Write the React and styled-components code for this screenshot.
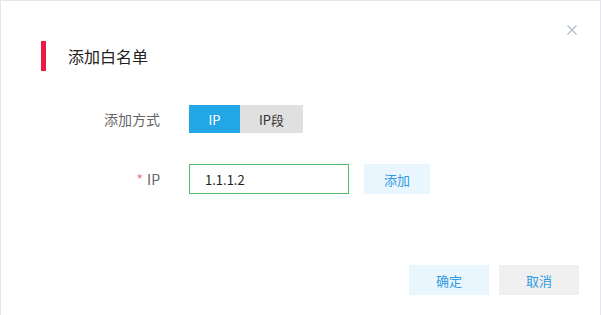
// Packages
import React, { useState } from "react"
import styled, { createGlobalStyle } from "styled-components"

// Styles
const GlobalStyle = createGlobalStyle`
    html, body {
        margin: 0;
        padding: 0;
        background: #ffffff;
    }

    body {
        font-family: "Noto Sans CJK SC", "Noto Sans", "Liberation Sans", sans-serif;
        color: #333333;
    }
`

const Modal = styled.div`
    width: 601px;
    height: 315px;
    box-sizing: border-box;
    border: 1px solid #e4e6eb;
    border-bottom: none;
    display: flex;
    flex-direction: column;
    background: #ffffff;
`

const Header = styled.div`
    display: flex;
    align-items: flex-start;
    justify-content: space-between;
    padding: 24px 23px 0 40px;
`

const TitleGroup = styled.div`
    display: flex;
    align-items: center;
    gap: 22px;
    margin-top: 16px;
`

const Marker = styled.span`
    display: block;
    width: 5px;
    height: 30px;
    background: #e91b45;
`

const Title = styled.h2`
    margin: 0;
    font-size: 16px;
    font-weight: 400;
    line-height: 30px;
    color: #222222;
`

const Close = styled.button`
    display: flex;
    width: 10px;
    height: 10px;
    padding: 0;
    border: none;
    background: none;
    cursor: pointer;
`

const Form = styled.div`
    display: flex;
    flex-direction: column;
    gap: 31px;
    padding: 34px 0 0 59px;
`

const Row = styled.div`
    display: flex;
    align-items: center;
    gap: 29px;
`

const Label = styled.label`
    width: 100px;
    text-align: right;
    font-size: 14px;
    color: #666666;
`

const Required = styled.span`
    color: #ee7a80;
    margin-right: 4px;
`

const Toggle = styled.div`
    display: flex;
    height: 28px;
`

const ToggleItem = styled.button`
    width: ${({ $width }) => $width}px;
    height: 28px;
    border: none;
    padding: 0;
    font-family: inherit;
    font-size: 13px;
    background: ${({ $active }) => ($active ? "#22a6e6" : "#e0e0e0")};
    color: ${({ $active }) => ($active ? "#ffffff" : "#333333")};
    cursor: pointer;
`

const Input = styled.input`
    width: 160px;
    height: 30px;
    box-sizing: border-box;
    border: 1px solid #56b96c;
    padding: 0 0 0 15px;
    font-family: inherit;
    font-size: 13px;
    color: #222222;
    outline: none;
`

const Button = styled.button`
    width: ${({ $width }) => $width || 80}px;
    height: 30px;
    border: none;
    padding: 0;
    font-family: inherit;
    font-size: 13px;
    color: #2f9be3;
    background: ${({ $muted }) => ($muted ? "#f0f0f0" : "#eaf6fd")};
    cursor: pointer;
`

const AddButton = styled(Button)`
    margin-left: -14px;
`

const Footer = styled.div`
    display: flex;
    justify-content: flex-end;
    gap: 10px;
    margin-top: auto;
    padding: 0 21px 20px 0;
`

function App() {
    const [mode, setMode] = useState("ip")
    const [ip, setIp] = useState("1.1.1.2")

    return (
        <>
            <GlobalStyle />
            <Modal>
                <Header>
                    <TitleGroup>
                        <Marker />
                        <Title>添加白名单</Title>
                    </TitleGroup>

                    <Close aria-label="关闭">
                        <svg width="10" height="10" viewBox="0 0 10 10">
                            <path
                                d="M0.5 0.5 L9.5 9.5 M9.5 0.5 L0.5 9.5"
                                stroke="#b1bac9"
                                strokeWidth="1.1"
                                fill="none"
                            />
                        </svg>
                    </Close>
                </Header>

                <Form>
                    <Row>
                        <Label>添加方式</Label>
                        <Toggle>
                            <ToggleItem
                                $width={51}
                                $active={mode === "ip"}
                                onClick={() => setMode("ip")}
                            >
                                IP
                            </ToggleItem>
                            <ToggleItem
                                $width={63}
                                $active={mode === "range"}
                                onClick={() => setMode("range")}
                            >
                                IP段
                            </ToggleItem>
                        </Toggle>
                    </Row>

                    <Row>
                        <Label>
                            <Required>*</Required>IP
                        </Label>
                        <Input value={ip} onChange={e => setIp(e.target.value)} />
                        <AddButton $width={66}>添加</AddButton>
                    </Row>
                </Form>

                <Footer>
                    <Button>确定</Button>
                    <Button $muted>取消</Button>
                </Footer>
            </Modal>
        </>
    )
}

export default App
